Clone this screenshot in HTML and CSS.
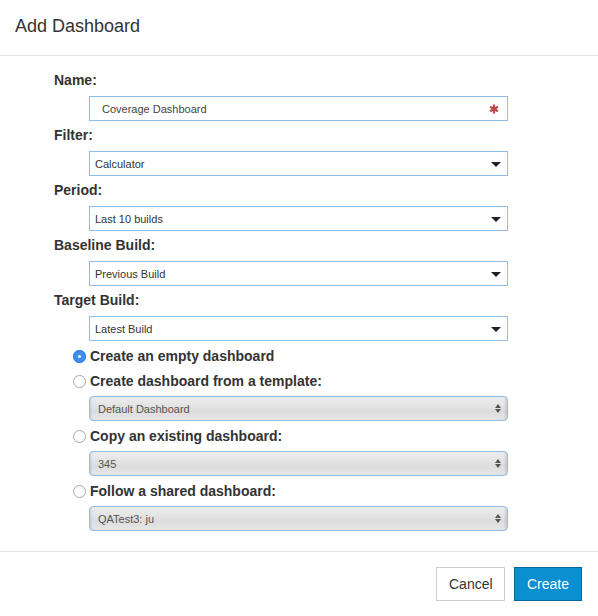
FILE: index.html
```html
<!DOCTYPE html>
<html>
<head>
<meta charset="utf-8">
<title>Add Dashboard</title>
<link rel="stylesheet" href="styles.css">
</head>
<body>
<div class="dialog">
  <div class="header"><h1 class="title">Add Dashboard</h1></div>
  <div class="body">
    <div class="label">Name:</div>
    <div class="field input">
      <span class="value name">Coverage Dashboard</span>
      <svg class="req" width="10" height="10" viewBox="0 0 10 10"><g stroke="#b94a48" stroke-width="2.2" stroke-linecap="butt"><line x1="5" y1="0.5" x2="5" y2="9.5"/><line x1="1.1" y1="2.75" x2="8.9" y2="7.25"/><line x1="1.1" y1="7.25" x2="8.9" y2="2.75"/></g></svg>
    </div>
    <div class="label">Filter:</div>
    <div class="field select"><span class="value">Calculator</span><span class="caret"></span></div>
    <div class="label">Period:</div>
    <div class="field select"><span class="value">Last 10 builds</span><span class="caret"></span></div>
    <div class="label">Baseline Build:</div>
    <div class="field select"><span class="value">Previous Build</span><span class="caret"></span></div>
    <div class="label">Target Build:</div>
    <div class="field select"><span class="value">Latest Build</span><span class="caret"></span></div>

    <div class="radio-row first"><span class="radio checked"></span><span class="radio-text">Create an empty dashboard</span></div>
    <div class="radio-row"><span class="radio"></span><span class="radio-text">Create dashboard from a template:</span></div>
    <div class="field gray"><span class="value">Default Dashboard</span><span class="updown"><span class="up"></span><span class="down"></span></span></div>
    <div class="radio-row"><span class="radio"></span><span class="radio-text">Copy an existing dashboard:</span></div>
    <div class="field gray"><span class="value">345</span><span class="updown"><span class="up"></span><span class="down"></span></span></div>
    <div class="radio-row"><span class="radio"></span><span class="radio-text">Follow a shared dashboard:</span></div>
    <div class="field gray"><span class="value">QATest3: ju</span><span class="updown"><span class="up"></span><span class="down"></span></span></div>
  </div>
  <div class="footer">
    <button class="btn cancel">Cancel</button>
    <button class="btn create">Create</button>
  </div>
</div>
</body>
</html>
```
FILE: styles.css
```css
html, body {
  margin: 0;
  padding: 0;
  background: #fff;
}
body {
  font-family: "Liberation Sans", Arial, Helvetica, sans-serif;
  color: #333;
}
.dialog {
  width: 598px;
  height: 616px;
  display: flex;
  flex-direction: column;
}
.header {
  flex-shrink: 0;
  height: 56px;
  border-bottom: 1px solid #e5e5e5;
  box-sizing: border-box;
  padding: 0 15px;
  display: flex;
  align-items: center;
}
.title {
  margin: 0;
  font-size: 18px;
  font-weight: normal;
  color: #333;
  line-height: 20px;
  padding-bottom: 4px;
}
.body {
  flex-shrink: 0;
  padding: 14px 90px 0 54px;
  display: flex;
  flex-direction: column;
}
.label {
  font-size: 14px;
  font-weight: bold;
  line-height: 20px;
  margin: 4px 0 6px;
  color: #333;
}
.body > .label:first-child {
  margin-top: 0;
}
.field {
  flex-shrink: 0;
  margin-left: 35px;
  height: 25px;
  box-sizing: border-box;
  display: flex;
  align-items: center;
  font-size: 11px;
  position: relative;
}
.input, .select {
  border: 1px solid #8fbbe6;
  background: #fff;
}
.value {
  color: #333;
}
.input .value.name {
  padding-left: 12px;
  color: #444;
}
.req {
  position: absolute;
  right: 8px;
  top: 7px;
}
.select .value {
  padding-left: 5px;
}
.caret {
  position: absolute;
  right: 6px;
  top: 10px;
  width: 0;
  height: 0;
  border-left: 5px solid transparent;
  border-right: 5px solid transparent;
  border-top: 5px solid #222;
}
.radio-row {
  flex-shrink: 0;
  display: flex;
  align-items: center;
  height: 20px;
  margin: 0 0 5px 19px;
}
.radio-row.first {
  margin-top: 5px;
}
.radio {
  width: 13px;
  height: 13px;
  box-sizing: border-box;
  border-radius: 50%;
  border: 1px solid #a9a9a9;
  background: #fff;
  margin-right: 4px;
  position: relative;
}
.radio.checked {
  border: none;
  background: #3d8ef0;
  box-shadow: inset 0 0 0 1px #2f7fe0;
}
.radio.checked::after {
  content: "";
  position: absolute;
  left: 5px;
  top: 5px;
  width: 3px;
  height: 3px;
  border-radius: 50%;
  background: #fff;
}
.radio-text {
  font-size: 14px;
  font-weight: bold;
  color: #333;
}
.gray {
  margin-bottom: 5px;
  border: 1px solid #95bde6;
  border-radius: 4px;
  background: linear-gradient(to bottom, #ededed 0%, #e2e2e2 45%, #dcdcdc 60%, #e6e6e6 100%);
  box-shadow: inset 2px 0 2px -1px rgba(0,0,0,0.12), inset -3px 0 2px -1px rgba(0,0,0,0.1);
}
.gray .value {
  padding-left: 8px;
  color: #555;
}
.updown {
  position: absolute;
  right: 6px;
  top: 7px;
  display: flex;
  flex-direction: column;
  gap: 1px;
}
.up {
  width: 0;
  height: 0;
  border-left: 3px solid transparent;
  border-right: 3px solid transparent;
  border-bottom: 4px solid #555;
}
.down {
  width: 0;
  height: 0;
  border-left: 3px solid transparent;
  border-right: 3px solid transparent;
  border-top: 4px solid #555;
}
.footer {
  flex-shrink: 0;
  margin-top: auto;
  border-top: 1px solid #e5e5e5;
  height: 65px;
  box-sizing: border-box;
  display: flex;
  justify-content: flex-end;
  align-items: flex-start;
  padding: 15px 16px 0 0;
  gap: 9px;
}
.btn {
  font-family: "Liberation Sans", Arial, Helvetica, sans-serif;
  font-size: 14px;
  height: 34px;
  box-sizing: border-box;
  padding: 0 12px;
  border-radius: 0;
  cursor: pointer;
}
.cancel {
  width: 69px;
  background: #fff;
  border: 1px solid #ccc;
  color: #333;
}
.create {
  width: 68px;
  background: #0a8fd0;
  border: 1px solid #04679c;
  color: #fff;
}
```
